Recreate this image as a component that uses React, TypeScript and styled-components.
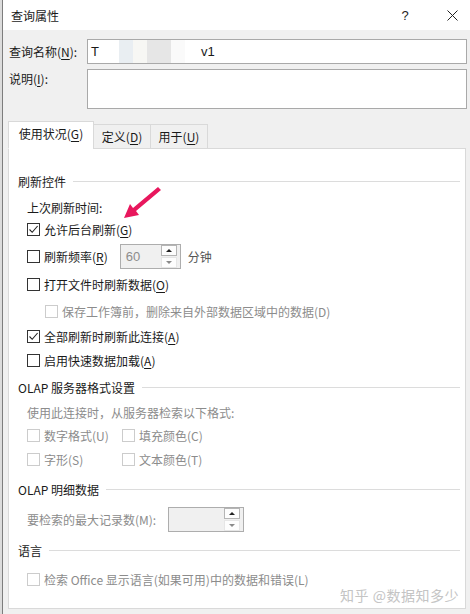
import React from 'react'
import styled, { createGlobalStyle } from 'styled-components'

const GlobalStyle = createGlobalStyle`
  html, body {
    margin: 0;
    padding: 0;
    background: #dcdcdc;
  }
  body {
    font-family: 'Noto Sans CJK SC', 'Microsoft YaHei', sans-serif;
    font-size: 12px;
    color: #1a1a1a;
  }
`

interface CheckItem {
  label: React.ReactNode
  checked?: boolean
  disabled?: boolean
}

const Key = ({ k }: { k: string }) => (
  <>
    (<U>{k}</U>)
  </>
)

const App = () => {
  return (
    <>
      <GlobalStyle />
      <Window>
        {/* 标题栏 */}
        <TitleBar>
          <Title>查询属性</Title>
          <TitleButtons>
            <TitleBtn $w={58}>?</TitleBtn>
            <TitleBtn $w={36}>
              <svg width='11' height='11' viewBox='0 0 11 11'>
                <path d='M0.5 0.5 L10.5 10.5 M10.5 0.5 L0.5 10.5' stroke='#222' strokeWidth='1' fill='none' />
              </svg>
            </TitleBtn>
          </TitleButtons>
        </TitleBar>

        <Body>
          <FieldRow>
            <FieldLabel>
              查询名称<Key k='N' />:
            </FieldLabel>
            <TextInput>
              <span>T</span>
              <Mosaic>
                <Tile $c='#ffffff' $w={10} />
                <Tile $c='#e9eef2' $w={14} />
                <Tile $c='#f7f7f4' $w={14} />
                <Tile $c='#e6e6e6' $w={24} />
                <Tile $c='#fafafa' $w={14} />
                <Tile $c='#ffffff' $w={12} />
              </Mosaic>
              <span>v1</span>
            </TextInput>
          </FieldRow>
          <FieldRow $top>
            <FieldLabel>
              说明<Key k='I' />:
            </FieldLabel>
            <TextArea />
          </FieldRow>

          {/* 选项卡 */}
          <TabBar>
            <Tab $active>
              使用状况<Key k='G' />
            </Tab>
            <Tab>
              定义<Key k='D' />
            </Tab>
            <Tab>
              用于<Key k='U' />
            </Tab>
          </TabBar>

          <Panel>
            <SectionTitle>刷新控件</SectionTitle>
            <Indent>
              <PlainLine>上次刷新时间:</PlainLine>
              <Row $h={26}>
                <Check checked />
                <span>
                  允许后台刷新<Key k='G' />
                </span>
              </Row>
              <Row $h={28}>
                <Check />
                <span>
                  刷新频率<Key k='R' />
                </span>
                <SpinBox $width={61} $ml={8}>
                  <SpinValue>60</SpinValue>
                  <SpinButtons>
                    <SpinBtn $up>
                      <Arrow $up />
                    </SpinBtn>
                    <SpinBtn>
                      <Arrow />
                    </SpinBtn>
                  </SpinButtons>
                </SpinBox>
                <Unit>分钟</Unit>
              </Row>
              <Row $h={28}>
                <Check />
                <span>
                  打开文件时刷新数据<Key k='O' />
                </span>
              </Row>
              <Row $h={26} $indent>
                <Check disabled />
                <Muted>保存工作簿前，删除来自外部数据区域中的数据(D)</Muted>
              </Row>
              <Row $h={24}>
                <Check checked />
                <span>
                  全部刷新时刷新此连接<Key k='A' />
                </span>
              </Row>
              <Row $h={24}>
                <Check />
                <span>
                  启用快速数据加载<Key k='A' />
                </span>
              </Row>
            </Indent>

            <SectionTitle $mt={6}>OLAP 服务器格式设置</SectionTitle>
            <Indent>
              <PlainLine $mt={9} $muted>
                使用此连接时，从服务器检索以下格式:
              </PlainLine>
              <FormatGrid>
                {formatItems.map((item, i) => (
                  <Row key={i} $h={24}>
                    <Check disabled />
                    <Muted>{item.label}</Muted>
                  </Row>
                ))}
              </FormatGrid>
            </Indent>

            <SectionTitle $mt={9}>OLAP 明细数据</SectionTitle>
            <Indent>
              <Row $h={26} $mt={8}>
                <Muted>要检索的最大记录数(M):</Muted>
                <SpinBox $width={76} $ml={8}>
                  <SpinValue />
                  <SpinButtons>
                    <SpinBtn $up>
                      <Arrow $up />
                    </SpinBtn>
                    <SpinBtn>
                      <Arrow />
                    </SpinBtn>
                  </SpinButtons>
                </SpinBox>
              </Row>
            </Indent>

            <SectionTitle $mt={9}>语言</SectionTitle>
            <Indent>
              <Row $h={24} $mt={8}>
                <Check disabled />
                <Muted>检索 Office 显示语言(如果可用)中的数据和错误(L)</Muted>
              </Row>
            </Indent>

            <Watermark>知乎 @数据知多少</Watermark>
          </Panel>
        </Body>

        {/* 标注箭头 */}
        <Annotation width='50' height='45' viewBox='0 0 50 45'>
          <polygon points='36,3 39,6 14,27 17,31 2,34 8,20 11,24' fill='#e8175d' />
        </Annotation>
      </Window>
    </>
  )
}

const formatItems: CheckItem[] = [
  { label: '数字格式(U)' },
  { label: '填充颜色(C)' },
  { label: '字形(S)' },
  { label: '文本颜色(T)' },
]

const Check = ({ checked, disabled }: { checked?: boolean; disabled?: boolean }) => (
  <CheckBox $disabled={disabled}>
    {checked && (
      <svg width='11' height='11' viewBox='0 0 11 11'>
        <path d='M1.5 5.5 L4.2 8.3 L9.6 2' stroke='#222' strokeWidth='1.1' fill='none' />
      </svg>
    )}
  </CheckBox>
)

export default App

const Window = styled.div`
  position: relative;
  display: flex;
  flex-direction: column;
  width: 468px;
  height: 614px;
  margin-left: 2px;
  background: #f0f0f0;
  border-left: 1px solid #7d7d7d;
  box-sizing: border-box;
  overflow: hidden;
`

// 标题栏
const TitleBar = styled.div`
  display: flex;
  align-items: center;
  justify-content: space-between;
  height: 30px;
  padding-left: 8px;
  background: #ffffff;
  flex-shrink: 0;
`
const Title = styled.span`
  font-size: 12px;
  color: #1a1a1a;
`
const TitleButtons = styled.div`
  display: flex;
  align-items: center;
  height: 100%;
`
const TitleBtn = styled.span<{ $w: number }>`
  display: flex;
  align-items: center;
  justify-content: center;
  width: ${(p) => p.$w}px;
  height: 100%;
  font-size: 13px;
  font-family: 'Liberation Sans', sans-serif;
  color: #222;
`

const Body = styled.div`
  display: flex;
  flex-direction: column;
  padding: 9px 3px 0 6px;
  flex: 1;
`

const FieldRow = styled.div<{ $top?: boolean }>`
  display: grid;
  grid-template-columns: 78px 1fr;
  align-items: ${(p) => (p.$top ? 'start' : 'center')};
  margin-top: ${(p) => (p.$top ? '5px' : '0')};
`
const FieldLabel = styled.span`
  line-height: 20px;
  white-space: nowrap;
`
const TextInput = styled.div`
  display: flex;
  align-items: center;
  height: 25px;
  padding-left: 3px;
  background: #ffffff;
  border: 1px solid #a9a9a9;
  box-sizing: border-box;
  font-size: 13px;
  font-family: 'Liberation Sans', sans-serif;
`
const Mosaic = styled.span`
  display: flex;
  height: 23px;
  margin: 0 4px 0 10px;
`
const Tile = styled.span<{ $c: string; $w: number }>`
  display: block;
  width: ${(p) => p.$w}px;
  height: 100%;
  background: ${(p) => p.$c};
`
const TextArea = styled.div`
  height: 40px;
  background: #ffffff;
  border: 1px solid #a9a9a9;
  box-sizing: border-box;
`

// 选项卡
const TabBar = styled.div`
  display: flex;
  align-items: flex-end;
  height: 28px;
  margin-top: 11px;
  margin-left: -1px;
  position: relative;
  z-index: 1;
`
const Tab = styled.div<{ $active?: boolean }>`
  display: flex;
  align-items: center;
  justify-content: center;
  box-sizing: border-box;
  height: ${(p) => (p.$active ? '28px' : '25px')};
  padding: ${(p) => (p.$active ? '0 0 3px' : '0')};
  width: ${(p) => (p.$active ? '86px' : '58px')};
  background: ${(p) => (p.$active ? '#ffffff' : '#f0f0f0')};
  border: 1px solid #d9d9d9;
  border-bottom: ${(p) => (p.$active ? '1px solid #ffffff' : '1px solid #d9d9d9')};
  margin-left: ${(p) => (p.$active ? '0' : '-1px')};
  margin-bottom: -1px;
`

const Panel = styled.div`
  position: relative;
  display: flex;
  flex-direction: column;
  width: 458px;
  height: 461px;
  margin-left: -1px;
  padding: 23px 5px 0 9px;
  box-sizing: border-box;
  background: #ffffff;
  border: 1px solid #d9d9d9;
`

const SectionTitle = styled.div<{ $mt?: number }>`
  display: flex;
  align-items: center;
  height: 18px;
  margin-top: ${(p) => p.$mt ?? 0}px;
  white-space: nowrap;

  &::after {
    content: '';
    flex: 1;
    height: 1px;
    margin-left: 7px;
    background: #dcdcdc;
  }
`
const Indent = styled.div`
  display: flex;
  flex-direction: column;
  padding-left: 9px;
`
const PlainLine = styled.div<{ $mt?: number; $muted?: boolean }>`
  height: 16px;
  line-height: 16px;
  margin-top: ${(p) => p.$mt ?? 10}px;
  color: ${(p) => (p.$muted ? '#8c8c8c' : '#1a1a1a')};
`
const Row = styled.div<{ $h: number; $mt?: number; $indent?: boolean }>`
  display: flex;
  align-items: center;
  gap: 4px;
  height: ${(p) => p.$h}px;
  margin-top: ${(p) => p.$mt ?? 0}px;
  padding-left: ${(p) => (p.$indent ? '18px' : '0')};
  white-space: nowrap;
`
const Muted = styled.span`
  color: #8c8c8c;
`
const U = styled.span`
  text-decoration: underline;
  text-underline-offset: 2px;
`
const CheckBox = styled.span<{ $disabled?: boolean }>`
  display: flex;
  align-items: center;
  justify-content: center;
  width: 13px;
  height: 13px;
  box-sizing: border-box;
  background: #ffffff;
  border: 1px solid ${(p) => (p.$disabled ? '#cccccc' : '#333333')};
  flex-shrink: 0;
`

const FormatGrid = styled.div`
  display: grid;
  grid-template-columns: 95px 1fr;
  margin-top: 2px;
`

const SpinBox = styled.div<{ $width: number; $ml: number }>`
  display: flex;
  align-items: center;
  justify-content: space-between;
  width: ${(p) => p.$width}px;
  height: 25px;
  margin-left: ${(p) => p.$ml}px;
  padding: 0 3px 0 5px;
  box-sizing: border-box;
  background: #f0f0f0;
  border: 1px solid #adadad;
`
const SpinValue = styled.span`
  font-size: 13px;
  font-family: 'Liberation Sans', sans-serif;
  color: #8c8c8c;
`
const SpinButtons = styled.div`
  display: flex;
  flex-direction: column;
  gap: 1px;
`
const SpinBtn = styled.span<{ $up?: boolean }>`
  display: flex;
  align-items: center;
  justify-content: center;
  width: 14px;
  height: 9px;
  background: #fdfdfd;
  border: 1px solid ${(p) => (p.$up ? '#b5b5b5' : '#e6e6e6')};
`
const Arrow = styled.span<{ $up?: boolean }>`
  width: 0;
  height: 0;
  border-left: 3px solid transparent;
  border-right: 3px solid transparent;
  ${(p) => (p.$up ? 'border-bottom: 3px solid #222;' : 'border-top: 3px solid #8a8a8a;')}
`
const Unit = styled.span`
  margin-left: 3px;
  color: #555;
`

const Watermark = styled.div`
  position: absolute;
  right: 6px;
  bottom: 3px;
  font-size: 14px;
  color: #c4c4c4;
  letter-spacing: 0.5px;
`

const Annotation = styled.svg`
  position: absolute;
  left: 119px;
  top: 184px;
`
